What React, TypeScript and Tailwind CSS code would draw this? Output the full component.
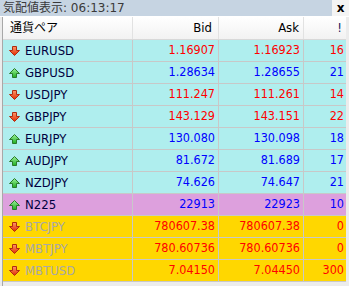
import React from "react";

type Row = { name: string; bid: string; ask: string; sp: string; up: boolean; color: "red" | "blue"; bg: "cyan" | "plum" | "gold" };

const rows: Row[] = [
  { name: "EURUSD", bid: "1.16907", ask: "1.16923", sp: "16", up: false, color: "red", bg: "cyan" },
  { name: "GBPUSD", bid: "1.28634", ask: "1.28655", sp: "21", up: true, color: "blue", bg: "cyan" },
  { name: "USDJPY", bid: "111.247", ask: "111.261", sp: "14", up: false, color: "red", bg: "cyan" },
  { name: "GBPJPY", bid: "143.129", ask: "143.151", sp: "22", up: false, color: "red", bg: "cyan" },
  { name: "EURJPY", bid: "130.080", ask: "130.098", sp: "18", up: true, color: "blue", bg: "cyan" },
  { name: "AUDJPY", bid: "81.672", ask: "81.689", sp: "17", up: true, color: "blue", bg: "cyan" },
  { name: "NZDJPY", bid: "74.626", ask: "74.647", sp: "21", up: true, color: "blue", bg: "cyan" },
  { name: "N225", bid: "22913", ask: "22923", sp: "10", up: true, color: "blue", bg: "plum" },
  { name: "BTCJPY", bid: "780607.38", ask: "780607.38", sp: "0", up: false, color: "red", bg: "gold" },
  { name: "MBTJPY", bid: "780.60736", ask: "780.60736", sp: "0", up: false, color: "red", bg: "gold" },
  { name: "MBTUSD", bid: "7.04150", ask: "7.04450", sp: "300", up: false, color: "red", bg: "gold" },
];

function Arrow({ up }: { up: boolean }) {
  if (up) {
    return (
      <svg width="11" height="10" viewBox="0 0 11 10" className="shrink-0">
        <defs>
          <linearGradient id="gUp" x1="0" y1="0" x2="0" y2="1">
            <stop offset="0" stopColor="#9af09a" />
            <stop offset="1" stopColor="#1fae1f" />
          </linearGradient>
        </defs>
        <path d="M5.5 0.5 L10.5 5.5 L7.5 5.5 L7.5 9.5 L3.5 9.5 L3.5 5.5 L0.5 5.5 Z" fill="url(#gUp)" stroke="#2a7a2a" strokeWidth="1" strokeLinejoin="round" />
      </svg>
    );
  }
  return (
    <svg width="11" height="10" viewBox="0 0 11 10" className="shrink-0">
      <defs>
        <linearGradient id="gDn" x1="0" y1="0" x2="0" y2="1">
          <stop offset="0" stopColor="#ff9a6a" />
          <stop offset="1" stopColor="#e02a00" />
        </linearGradient>
      </defs>
      <path d="M3.5 0.5 L7.5 0.5 L7.5 4.5 L10.5 4.5 L5.5 9.5 L0.5 4.5 L3.5 4.5 Z" fill="url(#gDn)" stroke="#b02a10" strokeWidth="1" strokeLinejoin="round" />
    </svg>
  );
}

const font = { fontFamily: '"DejaVu Sans", Verdana, "Noto Sans CJK JP", sans-serif' };
const cond = { fontFamily: '"DejaVu Sans Condensed", "DejaVu Sans", "Noto Sans CJK JP", sans-serif' };

export default function App() {
  return (
    <div className="w-[349px] h-[286px] bg-[#ececec] overflow-hidden flex flex-col" style={font}>
      <div className="h-[16px] flex items-stretch">
        <div className="flex-1 bg-[#c6d4e2] flex items-center pl-[3px] text-[12px] leading-none text-[#3a3a3a]">
          気配値表示: 06:13:17
        </div>
        <div className="w-[17px] bg-[#f4f4f4] flex items-center justify-center text-[12px] font-bold leading-none text-black">
          x
        </div>
      </div>
      <div className="h-[1px] bg-white" />
      <div className="flex-1 flex flex-col ml-[2px] mr-[3px] border-l border-[#a8a8a8]" style={cond}>
        <div className="h-[23px] grid grid-cols-[130px_86px_85px_42px] bg-gradient-to-b from-white to-[#f2f2f2] border-b border-[#d8d8d8] text-[13px] text-black">
          <div className="flex items-center pl-[7px] border-r border-[#e2e2e2] text-[12px]" style={font}>通貨ペア</div>
          <div className="flex items-center justify-end pr-[6px] border-r border-[#e2e2e2]">Bid</div>
          <div className="flex items-center justify-end pr-[4px] border-r border-[#e2e2e2]">Ask</div>
          <div className="flex items-center justify-end pr-[4px] text-[#202060]">!</div>
        </div>
        {rows.map((r) => {
          const bg = r.bg === "cyan" ? "bg-[#afeeee]" : r.bg === "plum" ? "bg-[#dda0dd]" : "bg-[#ffd700]";
          const nameColor = r.bg === "gold" ? "text-[#a8a8a8]" : "text-[#000040]";
          const numColor = r.color === "red" ? "text-[#ff0000]" : "text-[#0000ff]";
          return (
            <div key={r.name} className={`h-[22px] grid grid-cols-[130px_86px_85px_42px] border-b border-[#c8c8c8] ${bg} text-[13px]`}>
              <div className={`flex items-center gap-[5px] pl-[6px] border-r border-[#c8c8c8] ${nameColor}`}>
                <Arrow up={r.up} />
                <span>{r.name}</span>
              </div>
              <div className={`flex items-center justify-end pr-[3px] border-r border-[#c8c8c8] text-[12.5px] ${numColor}`}>{r.bid}</div>
              <div className={`flex items-center justify-end pr-[3px] border-r border-[#c8c8c8] text-[12.5px] ${numColor}`}>{r.ask}</div>
              <div className={`flex items-center justify-end pr-[2px] text-[12.5px] ${numColor}`}>{r.sp}</div>
            </div>
          );
        })}
      </div>
    </div>
  );
}
